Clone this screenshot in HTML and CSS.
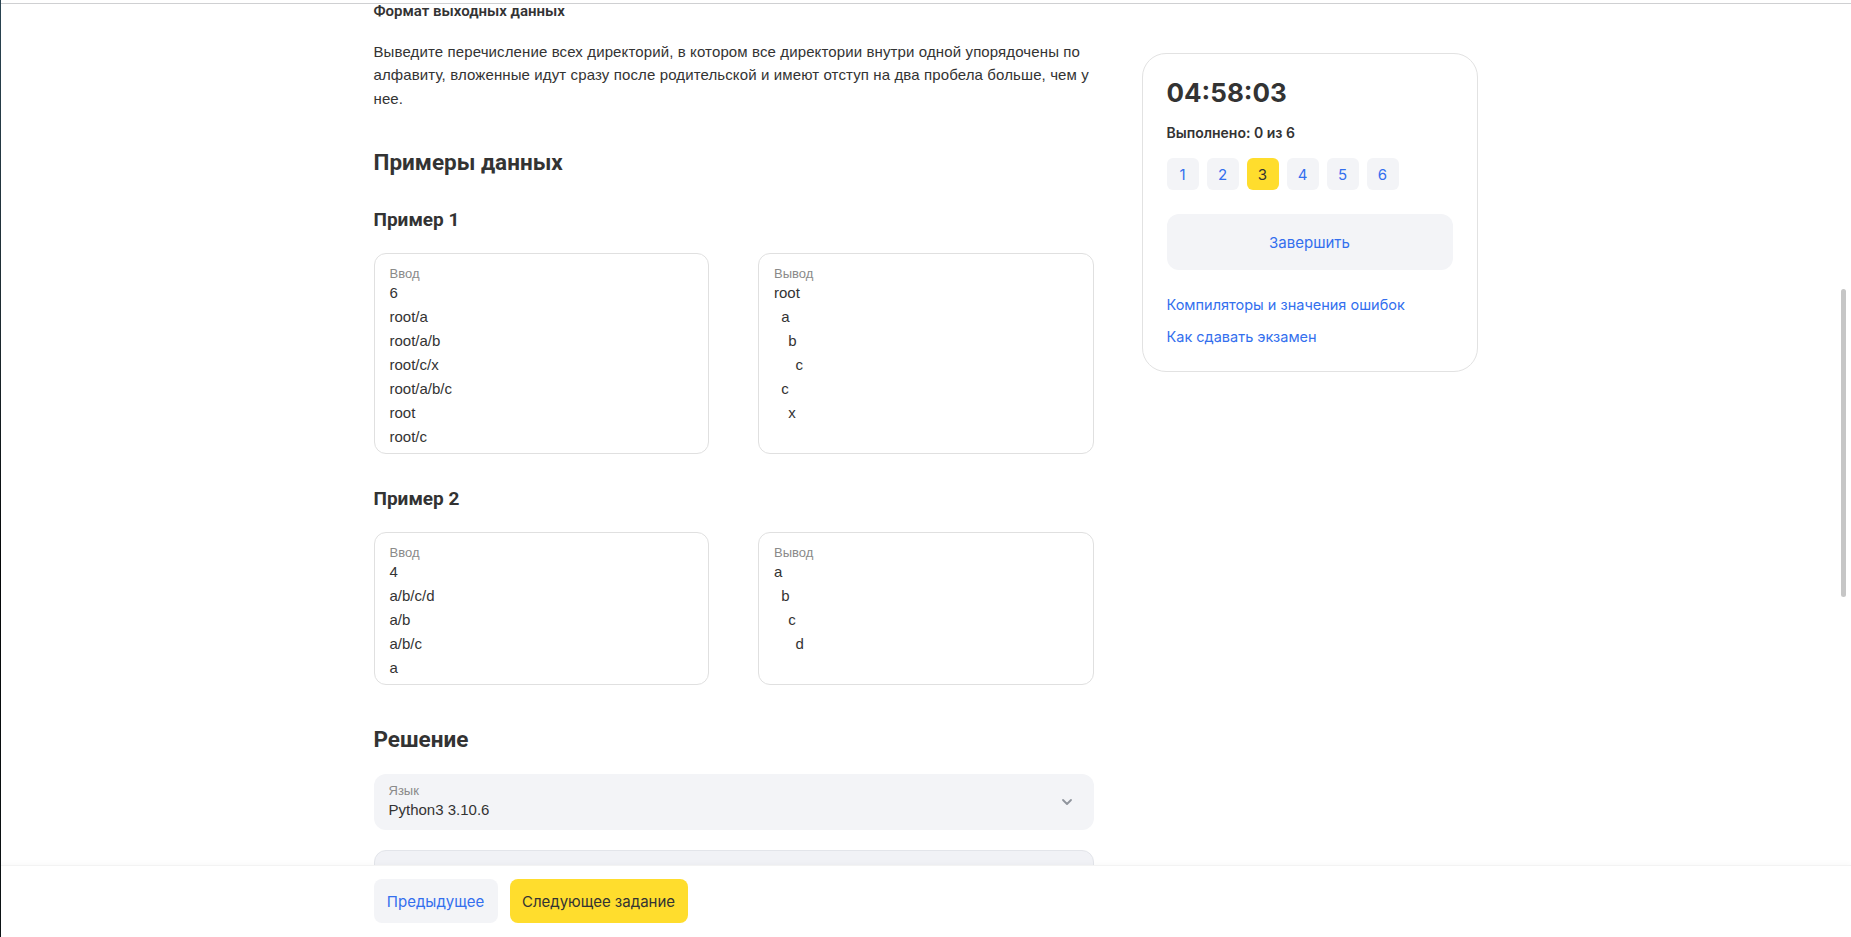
FILE: index.html
```html
<!DOCTYPE html>
<html lang="ru">
<head>
<meta charset="utf-8">
<title>Задание 3</title>
<link rel="stylesheet" href="styles.css">
</head>
<body>
<div class="edge"></div>
<div class="topline"></div>
<div class="layout">
  <main class="main">
    <h4 class="subhead">Формат выходных данных</h4>
    <p class="text">Выведите перечисление всех директорий, в котором все директории внутри одной упорядочены по алфавиту, вложенные идут сразу после родительской и имеют отступ на два пробела больше, чем у нее.</p>

    <h2 class="section-title">Примеры данных</h2>

    <h3 class="example-title">Пример 1</h3>
    <div class="example">
      <div class="sample">
        <div class="sample-label">Ввод</div>
        <div class="sample-value">6
root/a
root/a/b
root/c/x
root/a/b/c
root
root/c</div>
      </div>
      <div class="sample">
        <div class="sample-label">Вывод</div>
        <div class="sample-value">root
  a
    b
      c
  c
    x</div>
      </div>
    </div>

    <h3 class="example-title second">Пример 2</h3>
    <div class="example">
      <div class="sample">
        <div class="sample-label">Ввод</div>
        <div class="sample-value">4
a/b/c/d
a/b
a/b/c
a</div>
      </div>
      <div class="sample">
        <div class="sample-label">Вывод</div>
        <div class="sample-value">a
  b
    c
      d</div>
      </div>
    </div>

    <h2 class="section-title solution">Решение</h2>
    <div class="select">
      <div class="select-text">
        <div class="select-label">Язык</div>
        <div class="select-value">Python3 3.10.6</div>
      </div>
      <svg class="chevron" width="14" height="14" viewBox="0 0 14 14"><path d="M3 5l4 4 4-4" fill="none" stroke="#8f949c" stroke-width="1.8" stroke-linecap="round" stroke-linejoin="round"/></svg>
    </div>
    <div class="editor"></div>
  </main>

  <aside class="side">
    <div class="card">
      <div class="timer">04:58:03</div>
      <div class="progress">Выполнено: 0 из 6</div>
      <div class="tasks">
        <a class="task">1</a>
        <a class="task">2</a>
        <a class="task active">3</a>
        <a class="task">4</a>
        <a class="task">5</a>
        <a class="task">6</a>
      </div>
      <button class="finish">Завершить</button>
      <div class="links">
        <a class="link">Компиляторы и значения ошибок</a>
        <a class="link">Как сдавать экзамен</a>
      </div>
    </div>
  </aside>
</div>

<footer class="bottombar">
  <div class="bottom-inner">
    <button class="btn btn-prev">Предыдущее</button>
    <button class="btn btn-next">Следующее задание</button>
  </div>
</footer>

<div class="scrollthumb"></div>
</body>
</html>
```

FILE: styles.css
```css
* { box-sizing: border-box; }

html, body {
  margin: 0;
  padding: 0;
  height: 100%;
  overflow: hidden;
  background: #ffffff;
}

body {
  font-family: "Liberation Sans", Arial, sans-serif;
  color: #333333;
}

.edge {
  position: fixed;
  left: 0;
  top: 0;
  bottom: 0;
  width: 1px;
  background: linear-gradient(to bottom, #2a4452 0%, #1d2a30 35%, #050708 60%, #0d1416 100%);
  z-index: 10;
}

.topline {
  height: 4px;
  border-bottom: 1px solid #cfd0d2;
}

.layout {
  width: 1104px;
  margin: 0 auto;
  display: grid;
  grid-template-columns: 1fr 336px;
  column-gap: 48px;
  align-items: start;
}

.main {
  min-width: 0;
}

.subhead {
  margin: 0;
  font-family: Roboto, "Liberation Sans", sans-serif;
  font-size: 15px;
  line-height: 14px;
  font-weight: 600;
  color: #333;
}

.text {
  margin: 22px 0 0;
  font-size: 15px;
  line-height: 23.3px;
  letter-spacing: 0.12px;
}

.section-title {
  margin: 36px 0 0;
  font-family: Roboto, "Liberation Sans", sans-serif;
  font-size: 22.5px;
  line-height: 32px;
  font-weight: 700;
}

.example-title {
  margin: 28px 0 0;
  font-family: Roboto, "Liberation Sans", sans-serif;
  font-size: 19px;
  line-height: 28px;
  font-weight: 700;
}

.example-title.second {
  margin-top: 31px;
}

.example {
  margin-top: 19px;
  display: grid;
  grid-template-columns: 1fr 1fr;
  column-gap: 49px;
}

.sample {
  border: 1px solid #e0e0e0;
  border-radius: 12px;
  padding: 13px 15px 4px;
}

.sample-label {
  font-size: 13px;
  line-height: 14px;
  color: #8a8a8a;
}

.sample-value {
  white-space: pre;
  font-size: 15px;
  line-height: 24px;
  word-spacing: -0.6px;
  color: #333;
}

.section-title.solution {
  margin-top: 38px;
}

.select {
  margin-top: 19px;
  height: 56px;
  background: #f3f4f7;
  border-radius: 12px;
  padding: 0 20px 0 15px;
  display: flex;
  align-items: center;
  justify-content: space-between;
}

.select-label {
  font-size: 13px;
  line-height: 16px;
  color: #8a8a8a;
}

.select-value {
  font-size: 15px;
  line-height: 22px;
  color: #333;
}

.chevron {
  display: block;
}

.editor {
  margin-top: 20px;
  height: 120px;
  background: #f1f2f6;
  border: 1px solid #e3e5ea;
  border-radius: 12px;
}

/* sidebar */
.side {
  margin-top: 49px;
  font-family: Inter, "Liberation Sans", sans-serif;
}

.card {
  border: 1px solid #e2e2e2;
  border-radius: 24px;
  padding: 23px 24px 24px;
}

.timer {
  font-size: 26px;
  line-height: 32px;
  font-weight: 700;
  color: #333;
}

.progress {
  margin-top: 14px;
  font-size: 14px;
  line-height: 20px;
  font-weight: 600;
  color: #333;
}

.tasks {
  margin-top: 15px;
  display: flex;
  gap: 8px;
}

.task {
  width: 32px;
  height: 32px;
  border-radius: 6px;
  background: #f3f4f7;
  color: #336fee;
  font-size: 15px;
  display: flex;
  align-items: center;
  justify-content: center;
}

.task.active {
  background: #ffdd2d;
  color: #333;
}

.finish {
  margin-top: 24px;
  width: 100%;
  height: 56px;
  border: none;
  border-radius: 12px;
  background: #f3f4f7;
  color: #336fee;
  font-family: Inter, "Liberation Sans", sans-serif;
  font-size: 15px;
}

.links {
  margin-top: 25px;
  display: flex;
  flex-direction: column;
  gap: 12px;
}

.link {
  font-size: 14.5px;
  line-height: 20px;
  color: #336fee;
}

/* bottom bar */
.bottombar {
  position: fixed;
  left: 0;
  right: 0;
  bottom: 0;
  height: 72px;
  background: #ffffff;
  box-shadow: 0 -1px 6px rgba(0, 0, 0, 0.03);
  border-top: 1px solid #f3f3f3;
}

.bottom-inner {
  width: 1104px;
  margin: 0 auto;
  padding-top: 13px;
  display: flex;
  gap: 12px;
}

.btn {
  height: 44px;
  border: none;
  border-radius: 8px;
  font-family: Inter, "Liberation Sans", sans-serif;
  font-size: 15px;
  padding: 0;
  white-space: nowrap;
}

.btn-prev {
  width: 124px;
  background: #f3f4f7;
  color: #336fee;
}

.btn-next {
  width: 178px;
  background: #ffdd2d;
  color: #333;
}

.scrollthumb {
  position: fixed;
  right: 5px;
  top: 289px;
  width: 5px;
  height: 308px;
  border-radius: 3px;
  background: #c6c6c6;
}
```
